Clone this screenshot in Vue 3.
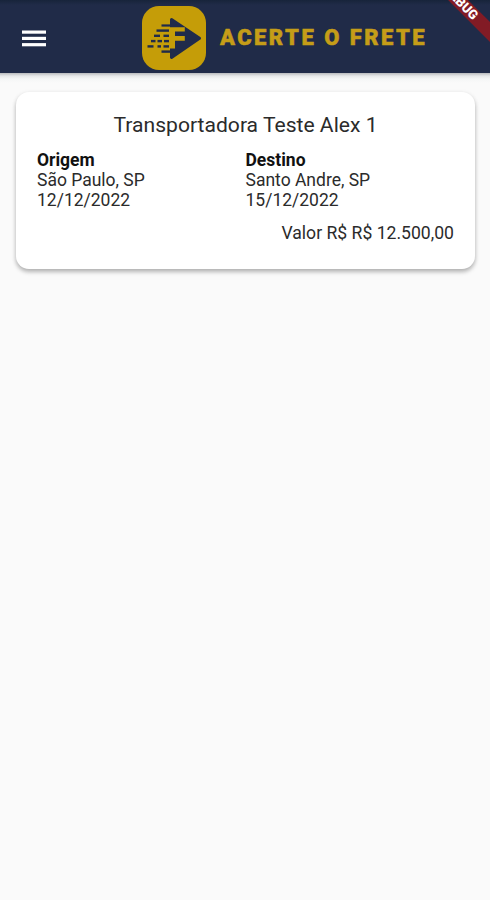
<script setup>
import { ref } from 'vue'

const fretes = ref([
  {
    id: 1,
    transportadora: 'Transportadora Teste Alex 1',
    origem: { cidade: 'São Paulo, SP', data: '12/12/2022' },
    destino: { cidade: 'Santo Andre, SP', data: '15/12/2022' },
    valor: 'R$ 12.500,00',
  },
])
</script>

<template>
  <div class="app">
    <header class="app-bar">
      <button class="menu-btn" aria-label="Menu">
        <svg width="24" height="18" viewBox="0 0 24 18" fill="#fff">
          <rect y="1.5" width="24" height="3.2" />
          <rect y="7.8" width="24" height="3.2" />
          <rect y="14.1" width="24" height="3.2" />
        </svg>
      </button>
      <svg class="logo" width="64" height="64" viewBox="0 0 64 64">
        <rect width="64" height="64" rx="17" fill="#c59d08" />
        <path d="M29.5 13.5 57.5 32.3 29.5 51.5z" fill="#202b4b" stroke="#202b4b" stroke-width="3" stroke-linejoin="round" />
        <!-- F -->
        <path d="M26 21.2h16.8v4.4h-9.8v4.4h9.8v4.8h-9.8v7.8H26z" fill="#c59d08" />
        <!-- speed lines -->
        <g fill="#202b4b">
          <rect x="19.5" y="18.4" width="10" height="2.2" />
          <rect x="14.5" y="23.4" width="12.5" height="2.4" />
          <rect x="12" y="28.6" width="6" height="2.4" />
          <rect x="21.5" y="28.6" width="5.5" height="2.4" />
          <rect x="9" y="33.9" width="4.5" height="2.4" />
          <rect x="15.5" y="33.9" width="4.5" height="2.4" />
          <rect x="22" y="33.9" width="5" height="2.4" />
          <rect x="5.5" y="39.2" width="6" height="2.4" />
          <rect x="15.5" y="39.2" width="3.5" height="2.4" />
          <rect x="21.5" y="39.2" width="5.5" height="2.4" />
          <rect x="19.5" y="44.4" width="10" height="2.4" />
        </g>
      </svg>
      <span class="brand">ACERTE O FRETE</span>
      <span class="debug">DEBUG</span>
    </header>

    <main class="list">
      <article v-for="f in fretes" :key="f.id" class="card">
        <h2 class="title">{{ f.transportadora }}</h2>
        <div class="route">
          <div class="stop">
            <strong>Origem</strong>
            <span>{{ f.origem.cidade }}</span>
            <span>{{ f.origem.data }}</span>
          </div>
          <div class="stop">
            <strong>Destino</strong>
            <span>{{ f.destino.cidade }}</span>
            <span>{{ f.destino.data }}</span>
          </div>
        </div>
        <div class="price">Valor R$ {{ f.valor }}</div>
      </article>
    </main>
  </div>
</template>

<style>
body { margin: 0; background: #fafafa; }
</style>

<style scoped>
.app {
  min-height: 900px; background: #fafafa; color: #2b2b2b;
  font-family: Roboto, "Liberation Sans", sans-serif;
}
.app-bar {
  position: relative; overflow: hidden;
  display: flex; align-items: center;
  box-sizing: border-box; height: 73px; padding: 3px 0 0 22px;
  background: linear-gradient(#17243a, #202b48 5px);
}
.menu-btn {
  display: flex; width: 24px; padding: 0;
  background: none; border: none; cursor: pointer;
}
.logo { margin-left: 96px; flex: none; }
.brand {
  margin-left: 14px; color: #c59d18; white-space: nowrap;
  position: relative; top: -1px;
  font-size: 22px; font-weight: 900; letter-spacing: 2.45px;
  -webkit-text-stroke: .5px #c59d18;
}
.debug {
  position: absolute; left: 401px; top: -4px;
  width: 120px; height: 14px; line-height: 14px;
  background: #821b25; color: #fff; text-align: center;
  font-size: 13px; font-weight: 900;
  transform: rotate(45deg);
}
.list {
  padding: 19px 15px 20px 16px;
  background: linear-gradient(#b8babd, #e6e7e8 3px, #f5f6f6 6px, #fafafa 10px);
}
.card {
  box-sizing: border-box; height: 177px; padding: 20px 21px;
  background: #fff; border-radius: 13px;
  box-shadow: 0 3px 4px rgba(0, 0, 0, .25), 0 1px 5px rgba(0, 0, 0, .08);
}
.title {
  margin: 0; line-height: 26px; text-align: center;
  font-size: 21.1px; font-weight: 400;
}
.route { display: flex; margin-top: 12px; }
.stop {
  display: flex; flex-direction: column; flex: 1;
  font-size: 17.5px; line-height: 20px;
}
.stop strong { font-weight: 700; color: #111; }
.price { margin-top: 13px; text-align: right; font-size: 17.6px; line-height: 20px; }
</style>
